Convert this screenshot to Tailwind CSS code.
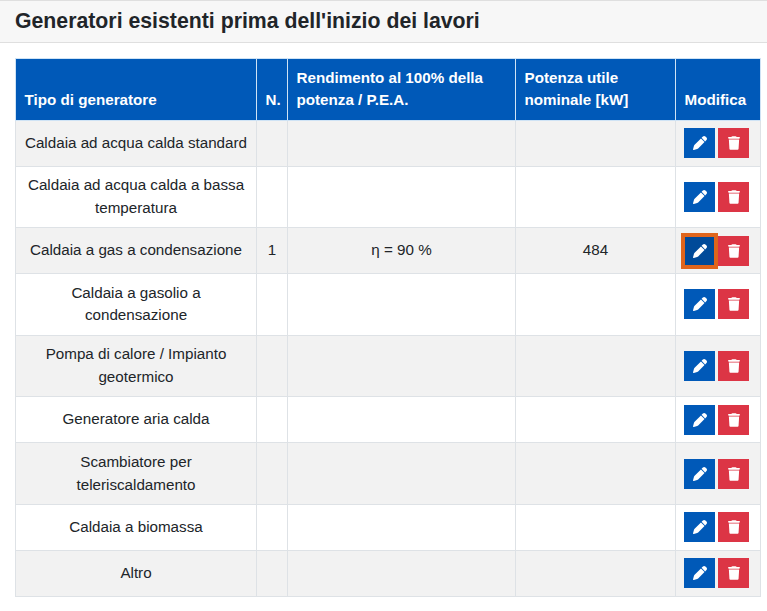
<!DOCTYPE html>
<html lang="it">
<head>
    <meta charset="UTF-8">
    <title>Generatori esistenti</title>
    <script src="https://cdn.jsdelivr.net/npm/@tailwindcss/browser@4"></script>
</head>
<body class="bg-white font-['Liberation_Sans',Arial,sans-serif] text-[#212529] overflow-hidden">
    <div class="h-[43px] bg-[#f7f7f7] border-y border-[#dfdfdf] pl-[15px] flex items-center">
        <h1 class="text-[21.28px] font-bold text-[#212529]">Generatori esistenti prima dell'inizio dei lavori</h1>
    </div>

    <div class="pt-[15px] pl-[15px]">
        <table class="w-[745px] table-fixed border-collapse text-[15.2px] leading-[22.8px]">
            <colgroup>
                <col class="w-[241px]">
                <col class="w-[31px]">
                <col class="w-[228px]">
                <col class="w-[160px]">
                <col class="w-[85px]">
            </colgroup>
            <thead>
                <tr class="bg-[#0059b8] text-white font-bold align-bottom text-left">
                    <th class="border border-[#cfe3f5] pl-[8.5px] pr-0 py-[7.5px]">Tipo di generatore</th>
                    <th class="border border-[#cfe3f5] pl-[8.5px] pr-0 py-[7.5px]">N.</th>
                    <th class="border border-[#cfe3f5] pl-[8.5px] pr-0 py-[7.5px]">Rendimento al 100% della potenza / P.E.A.</th>
                    <th class="border border-[#cfe3f5] pl-[8.5px] pr-0 py-[7.5px]">Potenza utile nominale [kW]</th>
                    <th class="border border-[#cfe3f5] pl-[8.5px] pr-0 py-[7.5px]">Modifica</th>
                </tr>
            </thead>
            <tbody id="rows" class="text-center"></tbody>
        </table>
    </div>

    <template id="actions">
        <div class="flex gap-[3px] pl-[8px]">
            <button class="edit w-[31px] h-[30px] bg-[#0059b8] flex items-center justify-center">
                <svg class="w-[14px] h-[14px]" viewBox="0 0 512 512" fill="#fff"><path d="M362.7 19.3 314.3 67.700 444.300 197.700 492.700 149.300c25-25 25-65.500 0-90.500L453.300 19.300c-25-25-65.500-25-90.600 0zM291.700 90.300 58.600 323.500c-10.400 10.400-18 23.300-22.200 37.400L1 481.200c-2.500 8.500-.2 17.600 6 23.800s15.300 8.500 23.700 6.100l120.300-35.400c14.100-4.200 27-11.800 37.400-22.200L421.700 220.300z"/></svg>
            </button>
            <button class="w-[31px] h-[30px] bg-[#dc3545] flex items-center justify-center">
                <svg class="w-[12px] h-[14px]" viewBox="0 0 448 512" fill="#fff"><path d="M135.200 17.700 128 32H32C14.300 32 0 46.300 0 64s14.300 32 32 32h384c17.700 0 32-14.300 32-32s-14.300-32-32-32h-96l-7.200-14.300C307.400 6.800 296.300 0 284.200 0H163.800c-12.100 0-23.200 6.800-28.600 17.700zM416 128H32l21.200 339c1.600 25.300 22.600 45 47.900 45h245.800c25.300 0 46.300-19.700 47.900-45z"/></svg>
            </button>
        </div>
    </template>

    <script>
        const generators = [
            { name: 'Caldaia ad acqua calda standard' },
            { name: 'Caldaia ad acqua calda a bassa temperatura' },
            { name: 'Caldaia a gas a condensazione', n: '1', eta: 'η = 90 %', kw: '484', focus: true },
            { name: 'Caldaia a gasolio a condensazione' },
            { name: 'Pompa di calore / Impianto geotermico' },
            { name: 'Generatore aria calda' },
            { name: 'Scambiatore per teleriscaldamento' },
            { name: 'Caldaia a biomassa' },
            { name: 'Altro' }
        ];

        const rows = document.getElementById('rows');
        const actions = document.getElementById('actions');

        generators.forEach((g, i) => {
            const tr = document.createElement('tr');
            tr.className = i % 2 === 0 ? 'bg-[#f2f2f2]' : 'bg-white';
            [g.name, g.n, g.eta, g.kw].forEach(text => {
                const td = document.createElement('td');
                td.className = 'border border-[#dee2e6] px-[7px] py-[7.5px]';
                td.textContent = text || '';
                tr.appendChild(td);
            });
            const last = document.createElement('td');
            last.className = 'border border-[#dee2e6] py-[7.5px]';
            const box = actions.content.cloneNode(true);
            if (g.focus) {
                box.querySelector('.edit').className = 'edit w-[31px] h-[30px] bg-[#004a99] flex items-center justify-center outline-solid outline-[4px] -outline-offset-1 outline-[#e0651c] relative';
            }
            last.appendChild(box);
            tr.appendChild(last);
            rows.appendChild(tr);
        });
    </script>
</body>
</html>
